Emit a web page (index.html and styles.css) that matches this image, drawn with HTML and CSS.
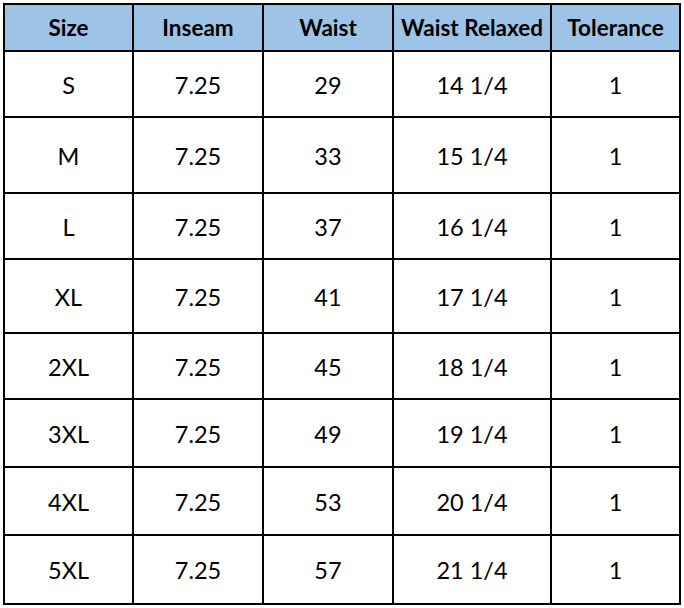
FILE: index.html
```html
<!DOCTYPE html>
<html lang="en">
<head>
<meta charset="utf-8">
<title>Size Chart</title>
<link rel="stylesheet" href="styles.css">
</head>
<body>
<div class="chart" role="table">
  <div class="cell head">Size</div><div class="cell head">Inseam</div><div class="cell head">Waist</div><div class="cell head">Waist Relaxed</div><div class="cell head">Tolerance</div>
  <div class="cell">S</div><div class="cell">7.25</div><div class="cell">29</div><div class="cell">14 1/4</div><div class="cell">1</div>
  <div class="cell">M</div><div class="cell">7.25</div><div class="cell">33</div><div class="cell">15 1/4</div><div class="cell">1</div>
  <div class="cell">L</div><div class="cell">7.25</div><div class="cell">37</div><div class="cell">16 1/4</div><div class="cell">1</div>
  <div class="cell">XL</div><div class="cell">7.25</div><div class="cell">41</div><div class="cell">17 1/4</div><div class="cell">1</div>
  <div class="cell">2XL</div><div class="cell">7.25</div><div class="cell">45</div><div class="cell">18 1/4</div><div class="cell">1</div>
  <div class="cell">3XL</div><div class="cell">7.25</div><div class="cell">49</div><div class="cell">19 1/4</div><div class="cell">1</div>
  <div class="cell">4XL</div><div class="cell">7.25</div><div class="cell">53</div><div class="cell">20 1/4</div><div class="cell">1</div>
  <div class="cell">5XL</div><div class="cell">7.25</div><div class="cell">57</div><div class="cell">21 1/4</div><div class="cell">1</div>
</div>
</body>
</html>
```
FILE: styles.css
```css
html, body {
  margin: 0;
  padding: 0;
  background: #ffffff;
}
body {
  padding: 3px 0 0 3px;
  font-family: "Lato", "Liberation Sans", sans-serif;
  color: #000;
}
.chart {
  display: grid;
  width: 678px;
  box-sizing: border-box;
  grid-template-columns: 127px 128px 128px 156px 127px;
  grid-template-rows: 45px 64px 74px 64px 72px 64px 66px 66px 67px;
  gap: 2px;
  padding: 2px;
  background: #000;
}
.cell {
  background: #fff;
  display: flex;
  align-items: center;
  justify-content: center;
  font-size: 23.5px;
  white-space: nowrap;
  padding-top: 1px;
}
.cell.head {
  background: #9dc3e6;
  font-weight: 700;
  font-size: 22.5px;
  padding-top: 0;
}
```
